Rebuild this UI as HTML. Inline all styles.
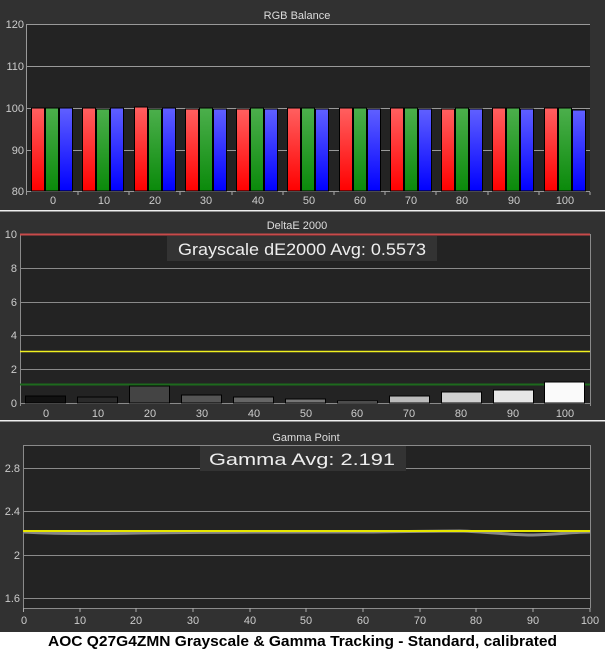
<!DOCTYPE html>
<html><head><meta charset="utf-8"><style>
html,body{margin:0;padding:0;background:#fff;}
svg{display:block;font-family:"Liberation Sans","DejaVu Sans",sans-serif;}
</style></head><body>
<svg width="605" height="652" viewBox="0 0 605 652" xmlns="http://www.w3.org/2000/svg">
<defs>
<linearGradient id="r" x1="0" y1="0" x2="0" y2="1"><stop offset="0" stop-color="#ff6060"/><stop offset="1" stop-color="#ff0000"/></linearGradient>
<linearGradient id="g" x1="0" y1="0" x2="0" y2="1"><stop offset="0" stop-color="#4caf4c"/><stop offset="1" stop-color="#0a8a0a"/></linearGradient>
<linearGradient id="b" x1="0" y1="0" x2="0" y2="1"><stop offset="0" stop-color="#6060ff"/><stop offset="1" stop-color="#0000ff"/></linearGradient>
</defs>
<rect x="0" y="0" width="605" height="632" fill="#313131"/>
<!-- Panel 1 -->
<text x="297" y="19" fill="#ddd" font-size="11" text-anchor="middle">RGB Balance</text>
<rect x="27" y="24" width="563" height="167" fill="#232323"/>
<g stroke="#999" stroke-width="1">
<line x1="27" y1="24.5" x2="590" y2="24.5"/><line x1="27" y1="66.5" x2="590" y2="66.5"/>
<line x1="27" y1="108.5" x2="590" y2="108.5"/><line x1="27" y1="150.5" x2="590" y2="150.5"/>
<line x1="27" y1="191.5" x2="590" y2="191.5"/><line x1="26.5" y1="24" x2="26.5" y2="195"/>
</g>
<g fill="#ccc" font-size="11" text-anchor="end">
<text x="24" y="28">120</text><text x="24" y="70">110</text><text x="24" y="112">100</text><text x="24" y="154">90</text><text x="24" y="195">80</text>
</g>
<g stroke="#000" stroke-width="1">
<rect x="31.5" y="108" width="13" height="83" fill="url(#r)"/><rect x="45.5" y="108" width="13" height="83" fill="url(#g)"/><rect x="59.5" y="108" width="13" height="83" fill="url(#b)"/>
<rect x="82.5" y="108" width="13" height="83" fill="url(#r)"/><rect x="96.5" y="109" width="13" height="82" fill="url(#g)"/><rect x="110.5" y="108" width="13" height="83" fill="url(#b)"/>
<rect x="134.5" y="107" width="13" height="84" fill="url(#r)"/><rect x="148.5" y="109" width="13" height="82" fill="url(#g)"/><rect x="162.5" y="108" width="13" height="83" fill="url(#b)"/>
<rect x="185.5" y="109" width="13" height="82" fill="url(#r)"/><rect x="199.5" y="108" width="13" height="83" fill="url(#g)"/><rect x="213.5" y="109" width="13" height="82" fill="url(#b)"/>
<rect x="236.5" y="109" width="13" height="82" fill="url(#r)"/><rect x="250.5" y="108" width="13" height="83" fill="url(#g)"/><rect x="264.5" y="109" width="13" height="82" fill="url(#b)"/>
<rect x="287.5" y="108" width="13" height="83" fill="url(#r)"/><rect x="301.5" y="108" width="13" height="83" fill="url(#g)"/><rect x="315.5" y="109" width="13" height="82" fill="url(#b)"/>
<rect x="339.5" y="108" width="13" height="83" fill="url(#r)"/><rect x="353.5" y="108" width="13" height="83" fill="url(#g)"/><rect x="367.5" y="109" width="13" height="82" fill="url(#b)"/>
<rect x="390.5" y="108" width="13" height="83" fill="url(#r)"/><rect x="404.5" y="108" width="13" height="83" fill="url(#g)"/><rect x="418.5" y="109" width="13" height="82" fill="url(#b)"/>
<rect x="441.5" y="109" width="13" height="82" fill="url(#r)"/><rect x="455.5" y="108" width="13" height="83" fill="url(#g)"/><rect x="469.5" y="109" width="13" height="82" fill="url(#b)"/>
<rect x="492.5" y="108" width="13" height="83" fill="url(#r)"/><rect x="506.5" y="108" width="13" height="83" fill="url(#g)"/><rect x="520.5" y="109" width="13" height="82" fill="url(#b)"/>
<rect x="544.5" y="108" width="13" height="83" fill="url(#r)"/><rect x="558.5" y="108" width="13" height="83" fill="url(#g)"/><rect x="572.5" y="110" width="13" height="81" fill="url(#b)"/>
</g>
<g stroke="#aaa"><line x1="78" y1="192" x2="78" y2="195"/><line x1="129" y1="192" x2="129" y2="195"/><line x1="180" y1="192" x2="180" y2="195"/><line x1="232" y1="192" x2="232" y2="195"/><line x1="283" y1="192" x2="283" y2="195"/><line x1="334" y1="192" x2="334" y2="195"/><line x1="385" y1="192" x2="385" y2="195"/><line x1="436" y1="192" x2="436" y2="195"/><line x1="488" y1="192" x2="488" y2="195"/><line x1="539" y1="192" x2="539" y2="195"/><line x1="590" y1="192" x2="590" y2="195"/></g>
<g fill="#ccc" font-size="11" text-anchor="middle">
<text x="53" y="204">0</text><text x="104" y="204">10</text><text x="155" y="204">20</text><text x="206" y="204">30</text><text x="258" y="204">40</text><text x="309" y="204">50</text><text x="360" y="204">60</text><text x="411" y="204">70</text><text x="462" y="204">80</text><text x="514" y="204">90</text><text x="565" y="204">100</text>
</g>
<rect x="0" y="210" width="605" height="1.5" fill="#eee"/>
<!-- Panel 2 -->
<text x="297" y="229" fill="#ddd" font-size="11" text-anchor="middle">DeltaE 2000</text>
<rect x="20" y="234" width="570" height="169" fill="#232323"/>
<g stroke="#8a8a8a" stroke-width="1">
<line x1="20" y1="268.5" x2="590" y2="268.5"/><line x1="20" y1="302.5" x2="590" y2="302.5"/><line x1="20" y1="335.5" x2="590" y2="335.5"/><line x1="20" y1="369.5" x2="590" y2="369.5"/><line x1="20" y1="403.5" x2="590" y2="403.5"/><line x1="20.5" y1="234" x2="20.5" y2="406"/><line x1="590.5" y1="234" x2="590.5" y2="406"/>
</g>
<line x1="20" y1="234.5" x2="590" y2="234.5" stroke="#c84a4a" stroke-width="2"/>
<line x1="20" y1="351.5" x2="590" y2="351.5" stroke="#f0f020" stroke-width="1.5"/>
<line x1="20" y1="384.5" x2="590" y2="384.5" stroke="#1d6a1d" stroke-width="2"/>
<g fill="#ccc" font-size="11" text-anchor="end">
<text x="17" y="238">10</text><text x="17" y="272">8</text><text x="17" y="306">6</text><text x="17" y="339">4</text><text x="17" y="373">2</text><text x="17" y="407">0</text>
</g>
<g stroke="#000" stroke-width="1">
<rect x="25.5" y="396" width="40" height="7" fill="#111"/>
<rect x="77.5" y="397" width="40" height="6" fill="#2a2a2a"/>
<rect x="129.5" y="386" width="40" height="17" fill="#444"/>
<rect x="181.5" y="395" width="40" height="8" fill="#555"/>
<rect x="233.5" y="397" width="40" height="6" fill="#666"/>
<rect x="285.5" y="399" width="40" height="4" fill="#777"/>
<rect x="337.5" y="401" width="40" height="2" fill="#999"/>
<rect x="389.5" y="396" width="40" height="7" fill="#bbb"/>
<rect x="441.5" y="392" width="40" height="11" fill="#d0d0d0"/>
<rect x="493.5" y="390" width="40" height="13" fill="#e6e6e6"/>
<rect x="544.5" y="382" width="40" height="21" fill="#fafafa"/>
</g>
<g fill="#ccc" font-size="11" text-anchor="middle">
<text x="46" y="417">0</text><text x="98" y="417">10</text><text x="150" y="417">20</text><text x="202" y="417">30</text><text x="254" y="417">40</text><text x="306" y="417">50</text><text x="357" y="417">60</text><text x="409" y="417">70</text><text x="461" y="417">80</text><text x="513" y="417">90</text><text x="565" y="417">100</text>
</g>
<rect x="167" y="236" width="270" height="25" fill="#333"/>
<text x="178" y="255" fill="#eee" font-size="17" textLength="248" lengthAdjust="spacingAndGlyphs">Grayscale dE2000 Avg: 0.5573</text>
<rect x="0" y="420" width="605" height="1.5" fill="#eee"/>
<!-- Panel 3 -->
<text x="306" y="441" fill="#ddd" font-size="11" text-anchor="middle">Gamma Point</text>
<rect x="23" y="445" width="567" height="163" fill="#232323"/>
<g stroke="#8a8a8a" stroke-width="1">
<line x1="23" y1="445.5" x2="590" y2="445.5"/><line x1="23" y1="468.5" x2="590" y2="468.5"/><line x1="23" y1="511.5" x2="590" y2="511.5"/><line x1="23" y1="555.5" x2="590" y2="555.5"/><line x1="23" y1="598.5" x2="590" y2="598.5"/><line x1="23.5" y1="445" x2="23.5" y2="608"/><line x1="590.5" y1="445" x2="590.5" y2="608"/><line x1="23" y1="608.5" x2="590" y2="608.5"/>
</g>
<path d="M23 532 C60 534 100 534 140 533 C200 532 300 532 350 532 C400 532 430 531 460 531 C490 532 510 535 533 535 C560 534 575 532 590 532" fill="none" stroke="#888" stroke-width="3"/>
<line x1="23" y1="531" x2="590" y2="531" stroke="#e6e600" stroke-width="2"/>
<g fill="#ccc" font-size="11" text-anchor="end">
<text x="20" y="472">2.8</text><text x="20" y="515">2.4</text><text x="20" y="559">2</text><text x="20" y="602">1.6</text>
</g>
<g stroke="#aaa"><line x1="23.5" y1="608" x2="23.5" y2="612"/><line x1="80" y1="608" x2="80" y2="612"/><line x1="136" y1="608" x2="136" y2="612"/><line x1="193" y1="608" x2="193" y2="612"/><line x1="250" y1="608" x2="250" y2="612"/><line x1="306" y1="608" x2="306" y2="612"/><line x1="363" y1="608" x2="363" y2="612"/><line x1="420" y1="608" x2="420" y2="612"/><line x1="476" y1="608" x2="476" y2="612"/><line x1="533" y1="608" x2="533" y2="612"/><line x1="590" y1="608" x2="590" y2="612"/></g>
<g fill="#ccc" font-size="11" text-anchor="middle">
<text x="24" y="624">0</text><text x="80" y="624">10</text><text x="136" y="624">20</text><text x="193" y="624">30</text><text x="250" y="624">40</text><text x="306" y="624">50</text><text x="363" y="624">60</text><text x="420" y="624">70</text><text x="476" y="624">80</text><text x="533" y="624">90</text><text x="590" y="624">100</text>
</g>
<rect x="200" y="446" width="206" height="25" fill="#333"/>
<text x="209" y="465" fill="#eee" font-size="17" textLength="186" lengthAdjust="spacingAndGlyphs">Gamma Avg: 2.191</text>
<text x="48" y="646" fill="#000" font-size="15" font-weight="bold" textLength="509" lengthAdjust="spacingAndGlyphs">AOC Q27G4ZMN Grayscale &amp; Gamma Tracking - Standard, calibrated</text>
</svg>
</body></html>
